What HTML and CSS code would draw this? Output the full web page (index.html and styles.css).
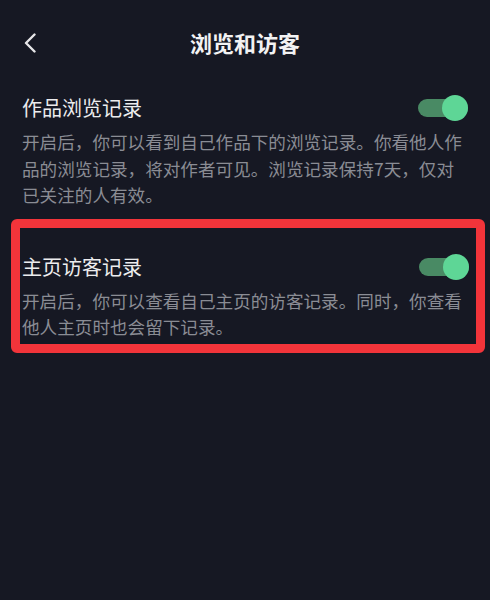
FILE: index.html
```html
<!DOCTYPE html>
<html lang="zh-CN">
<head>
    <meta charset="UTF-8">
    <meta name="viewport" content="width=device-width, initial-scale=1.0">
    <title>浏览和访客</title>
    <link rel="stylesheet" href="styles.css">
</head>
<body>
    <div class="header">
        <div class="back">
            <svg width="12" height="20" viewBox="0 0 12 20"><path d="M10.5 1.5 L2 10 L10.5 18.5" fill="none" stroke="#e6e6e8" stroke-width="2.4" stroke-linecap="round" stroke-linejoin="round"/></svg>
        </div>
        <div class="title">浏览和访客</div>
        <div></div>
    </div>

    <div class="list">
        <!-- 作品浏览记录 -->
        <div class="item">
            <div class="item-row">
                <span class="item-title">作品浏览记录</span>
                <span class="switch on"><span class="knob"></span></span>
            </div>
            <p class="item-desc">开启后，你可以看到自己作品下的浏览记录。你看他人作品的浏览记录，将对作者可见。浏览记录保持7天，仅对已关注的人有效。</p>
        </div>

        <!-- 主页访客记录 -->
        <div class="item marked">
            <div class="item-row">
                <span class="item-title">主页访客记录</span>
                <span class="switch on"><span class="knob"></span></span>
            </div>
            <p class="item-desc">开启后，你可以查看自己主页的访客记录。同时，你查看他人主页时也会留下记录。</p>
        </div>
    </div>
</body>
</html>
```

FILE: styles.css
```css
body {
    margin: 0;
    padding: 0;
    background: #161823;
    color: #ececee;
    font-family: "Noto Sans CJK SC", "Noto Sans", sans-serif;
}

.header {
    display: grid;
    grid-template-columns: 1fr auto 1fr;
    align-items: center;
    height: 84px;
    padding: 0 24px;
}

.back {
    display: flex;
    align-items: center;
    padding-top: 2px;
}

.title {
    font-size: 22px;
    font-weight: bold;
    color: #f2f2f3;
}

.list {
    padding: 10px 22px 0;
}

.item-row {
    display: flex;
    align-items: center;
    justify-content: space-between;
    height: 28px;
}

.item-title {
    font-size: 20px;
    line-height: 28px;
    color: #ececee;
}

.item-desc {
    margin: 7px 0 0;
    font-size: 17.6px;
    line-height: 26.5px;
    color: #8a8c94;
}

/* red frame round the second item */
.item.marked {
    margin: 10px -17px 0 -11px;
    padding: 25px 7px 3px 2px;
    border: 9px solid #f2343a;
    border-radius: 6px;
}

.switch {
    display: flex;
    align-items: center;
    justify-content: flex-end;
    width: 50px;
    height: 18px;
    border-radius: 9px;
    background: #498a64;
}

.switch .knob {
    width: 26px;
    height: 26px;
    border-radius: 50%;
    background: #5ed696;
    flex-shrink: 0;
}
```
